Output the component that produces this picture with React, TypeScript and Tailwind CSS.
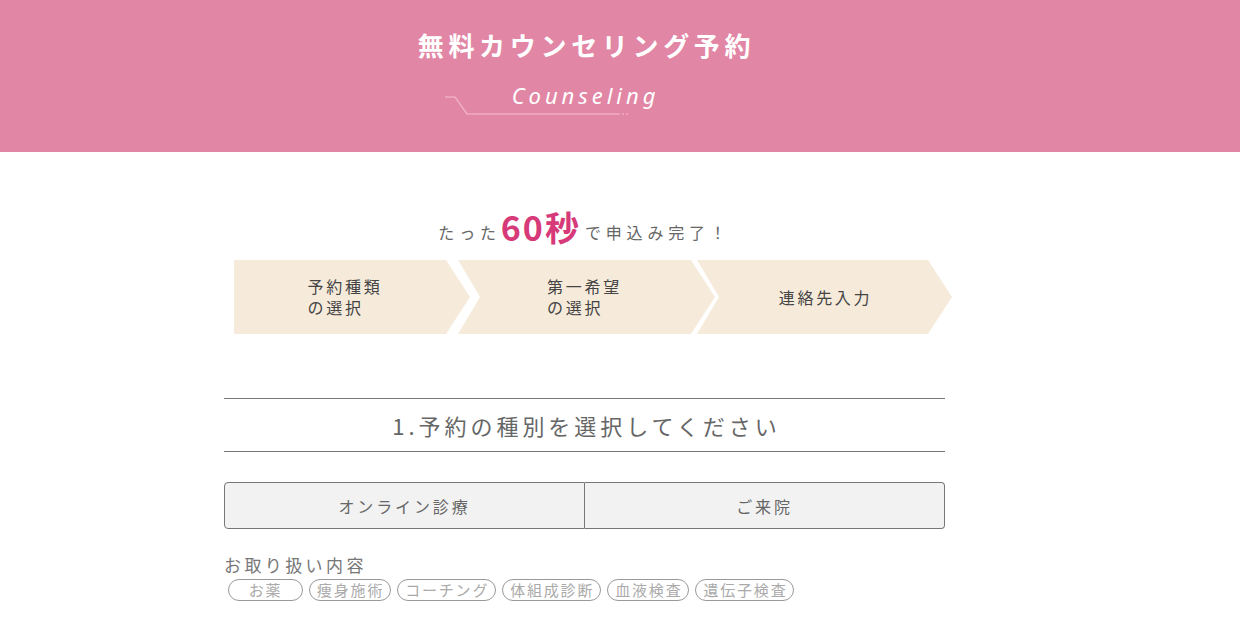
import React from "react";

const jp = { fontFamily: '"Noto Sans CJK JP", "Noto Sans", sans-serif' } as const;

export default function App() {
  const tags = ["お薬", "痩身施術", "コーチング", "体組成診断", "血液検査", "遺伝子検査"];
  return (
    <div className="w-[1240px] min-h-[628px] bg-white" style={jp}>
      <header className="h-[152px] bg-[#e286a5] flex flex-col">
        <div className="ml-[224px] w-[721px] flex flex-col items-center">
          <h1 className="mt-[26px] text-[26px] leading-[38px] font-bold tracking-[0.18em] text-white pl-[4px]">
            無料カウンセリング予約
          </h1>
          <div className="relative mt-[16px] w-[200px] h-[44px] flex justify-center">
            <span
              className="italic text-[22px] leading-[30px] tracking-[0.18em] text-white ml-[2px]"
              style={{ fontFamily: '"Noto Sans", sans-serif' }}
            >
              Counseling
            </span>
            <svg className="absolute left-[-40px] top-[14px]" width="190" height="24" viewBox="0 0 190 24">
              <polyline points="0,3 10,3 22,20 175,20" fill="none" stroke="#f3bed0" strokeWidth="1.2" />
              <line x1="177" y1="20" x2="184" y2="20" stroke="#f3bed0" strokeWidth="1.2" strokeDasharray="2 2" />
            </svg>
          </div>
        </div>
      </header>

      <main className="ml-[224px] w-[721px] flex flex-col">
        <p className="mt-[54px] flex items-end justify-center text-[16px] tracking-[0.3em] text-[#666] leading-[24px]">
          <span className="mb-[-2px]">たった</span>
          <span className="text-[34px] leading-[42px] font-bold text-[#d63a78] tracking-[0.06em] mb-[-6px] mr-[4px]">60秒</span>
          <span className="mb-[-2px]">で申込み完了！</span>
        </p>

        <div className="mt-[18px] ml-[10px] flex h-[74px]">
          <div className="shrink-0 w-[236px] h-full bg-[#f6ebdb] flex items-center justify-center text-[16px] leading-[21px] tracking-[0.17em] text-[#444] [clip-path:polygon(0_0,212px_0,236px_50%,212px_100%,0_100%)]">
            <div className="pr-[14px]">予約種類<br />の選択</div>
          </div>
          <div className="shrink-0 -ml-[12px] w-[257px] h-full bg-[#f6ebdb] flex items-center justify-center text-[16px] leading-[21px] tracking-[0.17em] text-[#444] [clip-path:polygon(0_0,233px_0,257px_50%,233px_100%,0_100%,22px_50%)]">
            <div className="pr-[4px]">第一希望<br />の選択</div>
          </div>
          <div className="shrink-0 -ml-[18px] w-[255px] h-full bg-[#f6ebdb] flex items-center justify-center text-[16px] leading-[21px] tracking-[0.17em] text-[#444] [clip-path:polygon(0_0,231px_0,255px_50%,231px_100%,0_100%,22px_50%)]">
            <div className="pl-[2px]">連絡先入力</div>
          </div>
        </div>

        <div className="mt-[64px] border-t border-b border-[#777] h-[54px] flex items-center justify-center">
          <h2 className="text-[22px] tracking-[0.18em] text-[#666] leading-[30px] pl-[4px]">1.予約の種別を選択してください</h2>
        </div>

        <div className="mt-[30px] flex h-[47px]">
          <button className="flex-1 bg-[#f2f2f2] border border-[#777] rounded-l-[4px] text-[16px] tracking-[0.18em] text-[#666]">
            オンライン診療
          </button>
          <button className="flex-1 bg-[#f2f2f2] border border-l-0 border-[#777] rounded-r-[4px] text-[16px] tracking-[0.18em] text-[#666]">
            ご来院
          </button>
        </div>

        <p className="mt-[25px] text-[17px] leading-[22px] tracking-[0.2em] text-[#777]">お取り扱い内容</p>
        <div className="mt-[3px] ml-[4px] flex gap-[6px]">
          {tags.map((t, i) => (
            <span
              key={t}
              className={
                "h-[22px] rounded-full border border-[#999] text-[15px] leading-[20px] tracking-[0.12em] text-[#aaa] flex items-center justify-center " +
                (i === 0 ? "w-[75px]" : "pl-[7px] pr-[6px]")
              }
            >
              {t}
            </span>
          ))}
        </div>
      </main>
    </div>
  );
}
